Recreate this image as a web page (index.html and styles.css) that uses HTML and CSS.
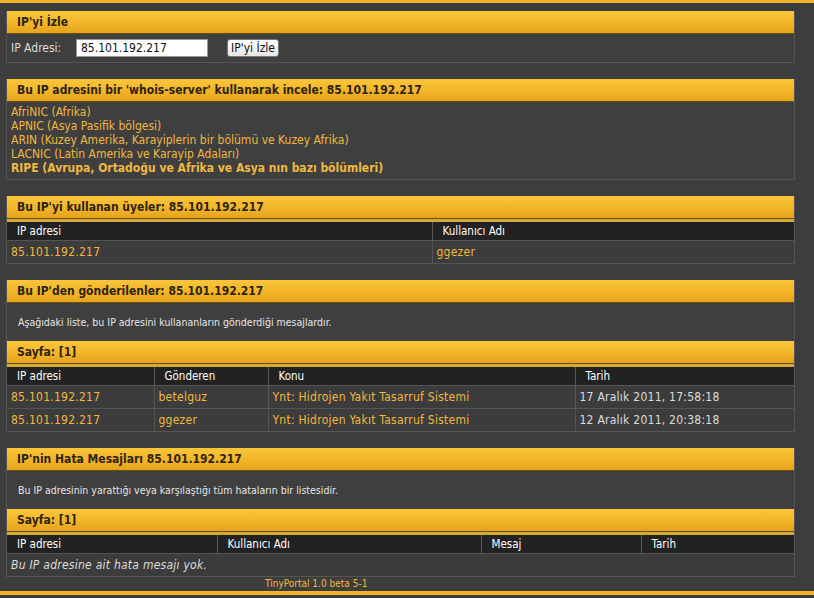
FILE: index.html
```html
<!DOCTYPE html>
<html lang="tr">
<head>
<meta charset="utf-8">
<title>IP'yi İzle</title>
<link rel="stylesheet" href="styles.css">
</head>
<body>
<div class="topstrip"></div>
<div class="page">
  <section class="panel">
    <div class="cat">IP'yi İzle</div>
    <div class="body form-row">
      <label class="lbl">IP Adresi:</label>
      <span class="input">85.101.192.217</span>
      <span class="button">IP'yi İzle</span>
    </div>
  </section>

  <section class="panel">
    <div class="cat">Bu IP adresini bir 'whois-server' kullanarak incele: 85.101.192.217</div>
    <div class="body list">
      <a class="link">AfriNIC (Afrika)</a>
      <a class="link">APNIC (Asya Pasifik bölgesi)</a>
      <a class="link">ARIN (Kuzey Amerika, Karayiplerin bir bölümü ve Kuzey Afrika)</a>
      <a class="link">LACNIC (Latin Amerika ve Karayip Adaları)</a>
      <a class="link strong">RIPE (Avrupa, Ortadoğu ve Afrika ve Asya nın bazı bölümleri)</a>
    </div>
  </section>

  <section class="panel">
    <div class="cat">Bu IP'yi kullanan üyeler: 85.101.192.217</div>
    <table class="grid">
      <colgroup><col class="w425"><col></colgroup>
      <thead><tr><th>IP adresi</th><th>Kullanıcı Adı</th></tr></thead>
      <tbody><tr><td class="link">85.101.192.217</td><td class="link">ggezer</td></tr></tbody>
    </table>
  </section>

  <section class="panel">
    <div class="cat">Bu IP'den gönderilenler: 85.101.192.217</div>
    <div class="body desc">Aşağıdaki liste, bu IP adresini kullananların gönderdiği mesajlardır.</div>
    <div class="cat">Sayfa: [1]</div>
    <table class="grid">
      <colgroup><col class="w147"><col class="w114"><col class="w307"><col></colgroup>
      <thead><tr><th>IP adresi</th><th>Gönderen</th><th>Konu</th><th>Tarih</th></tr></thead>
      <tbody>
        <tr><td class="link">85.101.192.217</td><td class="link">betelguz</td><td class="link">Ynt: Hidrojen Yakıt Tasarruf Sistemi</td><td class="plain">17 Aralık 2011, 17:58:18</td></tr>
        <tr><td class="link">85.101.192.217</td><td class="link">ggezer</td><td class="link">Ynt: Hidrojen Yakıt Tasarruf Sistemi</td><td class="plain">12 Aralık 2011, 20:38:18</td></tr>
      </tbody>
    </table>
  </section>

  <section class="panel">
    <div class="cat">IP'nin Hata Mesajları 85.101.192.217</div>
    <div class="body desc">Bu IP adresinin yarattığı veya karşılaştığı tüm hataların bir listesidir.</div>
    <div class="cat">Sayfa: [1]</div>
    <table class="grid">
      <colgroup><col class="w210"><col class="w264"><col class="w160"><col></colgroup>
      <thead><tr><th>IP adresi</th><th>Kullanıcı Adı</th><th>Mesaj</th><th>Tarih</th></tr></thead>
      <tbody><tr><td class="empty" colspan="4">Bu IP adresine ait hata mesajı yok.</td></tr></tbody>
    </table>
  </section>

  <div class="footer">TinyPortal 1.0 beta 5-1</div>
</div>
<div class="bottomstrip"></div>
</body>
</html>
```

FILE: styles.css
```css
html, body {
  margin: 0;
  padding: 0;
  background: #3d3d3d;
  font-family: "DejaVu Sans Condensed", "DejaVu Sans", sans-serif;
  font-size: 11px;
  color: #dcdcdc;
}
.topstrip {
  height: 3px;
  background: #f2b52e;
}
.page {
  padding: 8px 19px 0 6px;
  display: flex;
  flex-direction: column;
  gap: 16px;
}
.panel {
  border: 1px solid #555;
  border-top: 0;
  background: #3f3f3f;
}
.cat {
  height: 22px;
  line-height: 22px;
  padding-left: 10px;
  background: linear-gradient(#f9c63a, #f2b328 60%, #e3a31c);
  border-bottom: 1px solid #6a4c0c;
  color: #2e2410;
  font-weight: bold;
  font-size: 12px;
}
.body {
  padding: 0 4px;
}
.form-row {
  height: 28px;
  display: flex;
  align-items: center;
}
.lbl { color: #dcdcdc; font-size: 12px; width: 65px; }
.input {
  width: 126px;
  height: 16px;
  line-height: 16px;
  background: #fff;
  border: 1px solid #999;
  color: #111;
  font-size: 12px;
  padding-left: 4px;
}
.button {
  margin-left: 19px;
  height: 16px;
  line-height: 16px;
  padding: 0 3px;
  background: linear-gradient(#fff, #e6e6e6);
  border: 1px solid #777;
  border-radius: 3px;
  color: #111;
  font-size: 12px;
}
.list {
  display: flex;
  flex-direction: column;
  padding: 3px 4px 4px 4px;
}
.list .link {
  line-height: 14px;
  font-size: 12px;
}
.link { color: #f0b840; text-decoration: none; }
.strong { font-weight: bold; }
.desc {
  height: 38px;
  line-height: 38px;
  padding-left: 11px;
  font-size: 10.5px;
  color: #e6e6e6;
}
.grid {
  width: 100%;
  border-collapse: collapse;
  table-layout: fixed;
}
.w425 { width: 425px; }
.w147 { width: 147px; }
.w114 { width: 114px; }
.w307 { width: 307px; }
.w210 { width: 210px; }
.w264 { width: 264px; }
.w160 { width: 160px; }
.grid th {
  text-align: left;
  font-weight: normal;
  color: #fff;
  background: #222;
  border-top: 3px solid #d9a83a;
  border-left: 1px solid #5a5a5a;
  border-bottom: 1px solid #555;
  height: 18px;
  padding: 0 0 0 10px;
  font-size: 11.5px;
}
.grid th:first-child { border-left: 0; }
.grid td {
  height: 22px;
  padding: 0 0 0 4px;
  border-left: 1px solid #555;
  border-bottom: 1px solid #555;
  font-size: 12px;
  letter-spacing: 0.25px;
  background: #3c3c3c;
}
.grid td:first-child { border-left: 0; }
.grid tr:last-child td { border-bottom: 0; }
.plain { color: #dcdcdc; }
.empty { color: #dcdcdc; font-style: italic; }
.footer {
  margin-top: -16px;
  padding-left: 259px;
  height: 14px;
  line-height: 14px;
  font-size: 10px;
  color: #f0b840;
}
.bottomstrip {
  height: 4px;
  background: #f2b52e;
}
```
